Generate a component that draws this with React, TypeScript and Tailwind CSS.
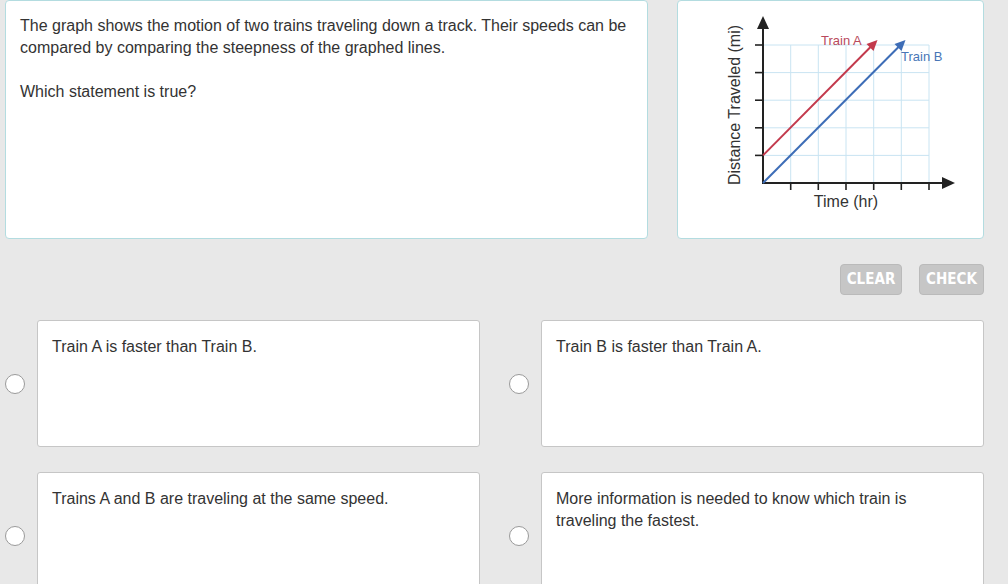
import React from "react";

const gridX = [763, 790.7, 818.3, 846, 873.7, 901.3, 929];
const gridY = [183, 155.4, 127.8, 100.2, 72.6, 45];

function Graph() {
  return (
    <svg width="305" height="237" viewBox="678 1 305 237" className="block">
      {/* grid */}
      {gridX.slice(1).map((x) => (
        <line key={"gx" + x} x1={x} y1={45} x2={x} y2={183} stroke="#c9e4f2" strokeWidth="1" />
      ))}
      {gridY.slice(1).map((y) => (
        <line key={"gy" + y} x1={763} y1={y} x2={929} y2={y} stroke="#c9e4f2" strokeWidth="1" />
      ))}

      {/* ticks */}
      {gridY.slice(1).map((y) => (
        <line key={"ty" + y} x1={755} y1={y} x2={763} y2={y} stroke="#222" strokeWidth="1.6" />
      ))}
      {gridX.slice(1).map((x) => (
        <line key={"tx" + x} x1={x} y1={183} x2={x} y2={190} stroke="#222" strokeWidth="1.6" />
      ))}

      {/* axes */}
      <line x1="763" y1="184" x2="763" y2="26" stroke="#222" strokeWidth="2" />
      <polygon points="763,16 757,29 769,29" fill="#222" />
      <line x1="762" y1="183" x2="944" y2="183" stroke="#222" strokeWidth="2" />
      <polygon points="955,183 942,177 942,189" fill="#222" />

      {/* train A */}
      <line x1="763" y1="155.4" x2="873" y2="44.5" stroke="#c3394c" strokeWidth="2" />
      <polygon points="877.5,40 866.5,44 873.5,51" fill="#c3394c" />

      {/* train B */}
      <line x1="763" y1="183" x2="901" y2="44.5" stroke="#3d6db7" strokeWidth="2" />
      <polygon points="905.5,40 894.5,44 901.5,51" fill="#3d6db7" />

      <text x="821" y="45" fontSize="13" fill="#b94a5c" fontFamily="Liberation Sans, Arial, sans-serif">
        Train A
      </text>
      <text x="901" y="60.5" fontSize="13" fill="#4876b7" fontFamily="Liberation Sans, Arial, sans-serif">
        Train B
      </text>

      <text
        x="739.5"
        y="105"
        fontSize="16"
        fill="#333"
        textAnchor="middle"
        transform="rotate(-90 739.5 105)"
        fontFamily="Liberation Sans, Arial, sans-serif"
      >
        Distance Traveled (mi)
      </text>
      <text x="846" y="207" fontSize="16" fill="#333" textAnchor="middle" fontFamily="Liberation Sans, Arial, sans-serif">
        Time (hr)
      </text>
    </svg>
  );
}

function Answer({ text }: { text: string }) {
  return (
    <div className="flex items-center gap-[12px]">
      <span className="w-[20px] h-[20px] shrink-0 rounded-full border border-[#9a9a9a] bg-white" />
      <div className="w-[443px] h-[127px] shrink-0 bg-white border border-[#c6c6c6] rounded-[3px] pl-[14px] pr-[12px] pt-[15px] font-['Liberation_Sans',Arial,sans-serif] text-[16px] leading-[22px] text-[#333]">
        {text}
      </div>
    </div>
  );
}

export default function App() {
  return (
    <div className="min-h-screen h-[584px] overflow-hidden bg-[#e8e8e8] pl-[5px] pr-[24px] font-['Liberation_Sans',Arial,sans-serif] text-[#333]">
      <div className="flex gap-[29px]">
        <div className="w-[643px] h-[239px] shrink-0 bg-white border border-[#b3dce0] rounded-[4px] pl-[14px] pr-[8px] pt-[14px] text-[16px] leading-[22px]">
          <p>
            The graph shows the motion of two trains traveling down a track. Their speeds can be compared by
            comparing the steepness of the graphed lines.
          </p>
          <p className="mt-[22px]">Which statement is true?</p>
        </div>
        <div className="w-[307px] h-[239px] shrink-0 bg-white border border-[#b3dce0] rounded-[4px]">
          <Graph />
        </div>
      </div>

      <div className="flex justify-end gap-[17px] mt-[25px]">
        <button className="h-[31px] w-[62px] rounded-[4px] bg-[#c6c6c6] border border-[#bababa] text-white font-bold text-[15px] font-['Liberation_Sans_Narrow','DejaVu_Sans_Condensed',sans-serif]">
          CLEAR
        </button>
        <button className="h-[31px] w-[65px] rounded-[4px] bg-[#c6c6c6] border border-[#bababa] text-white font-bold text-[15px] font-['Liberation_Sans_Narrow','DejaVu_Sans_Condensed',sans-serif]">
          CHECK
        </button>
      </div>

      <div className="grid grid-cols-[475px_475px] gap-x-[29px] gap-y-[25px] mt-[25px]">
        <Answer text="Train A is faster than Train B." />
        <Answer text="Train B is faster than Train A." />
        <Answer text="Trains A and B are traveling at the same speed." />
        <Answer text="More information is needed to know which train is traveling the fastest." />
      </div>
    </div>
  );
}
